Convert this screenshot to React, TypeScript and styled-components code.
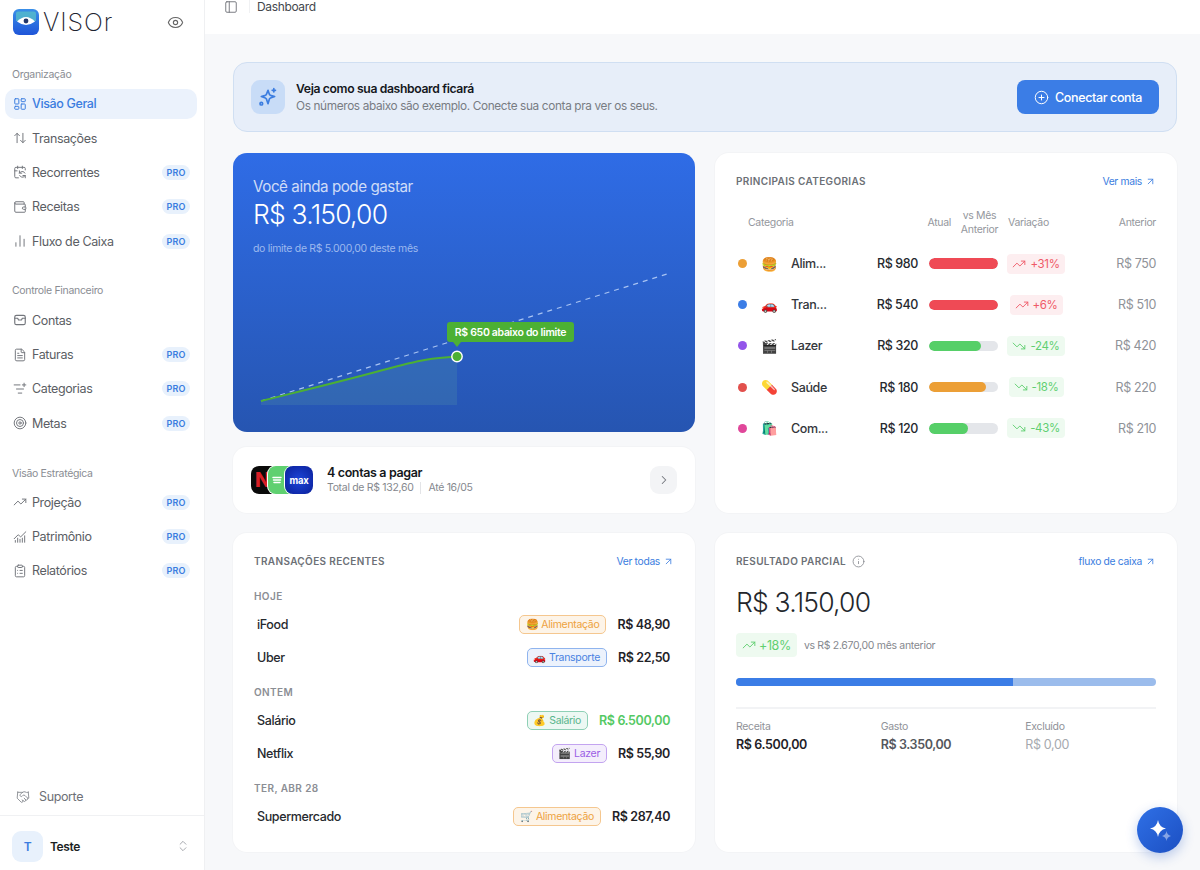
import React from 'react';
import styled, { createGlobalStyle } from 'styled-components';
import {
  LayoutDashboard, ArrowUpDown, CalendarSync, Wallet, ChartNoAxesColumn, FileText, ListFilterPlus,
  Target, TrendingUp, TrendingDown, ChartNoAxesCombined, ClipboardList, Handshake, Eye, PanelLeft,
  ChevronsUpDown, CirclePlus, ArrowUpRight, Info, ChevronRight,
} from 'lucide-react';

const GlobalStyle = createGlobalStyle`
  html, body { margin: 0; padding: 0; }
  body {
    font-family: Inter, "Liberation Sans", "Noto Color Emoji", sans-serif;
    color: #222;
    -webkit-font-smoothing: antialiased;
  }
  * { box-sizing: border-box; letter-spacing: -0.03em; }
`;

const Page = styled.div`
  display: flex;
  height: 870px;
  overflow: hidden;
  position: relative;
`;

/* ---------- sidebar ---------- */

const Sidebar = styled.aside`
  width: 205px;
  flex-shrink: 0;
  display: flex;
  flex-direction: column;
  background: #fff;
  border-right: 1px solid #eff0f2;
`;

const Brand = styled.div`
  display: flex;
  align-items: center;
  justify-content: space-between;
  height: 44px;
  padding: 0 20px 0 13px;
  color: #666;
`;

const BrandLeft = styled.div`
  display: flex;
  align-items: center;
  gap: 4px;
`;

const Wordmark = styled.span`
  font-size: 25px;
  font-weight: 200;
  letter-spacing: .9px;
  color: #1d2430;
  line-height: 26px;
`;

const NavSection = styled.nav`
  display: flex;
  flex-direction: column;
  margin-top: ${p => p.$top}px;
`;

const SectionLabel = styled.div`
  font-size: 10.5px;
  line-height: 14px;
  color: #8a8d93;
  padding-left: 12px;
  margin-bottom: 6.5px;
`;

const NavItem = styled.a`
  display: flex;
  align-items: center;
  height: 30.4px;
  margin: 0 7px 4px 5px;
  padding: 0 7px 0 8px;
  gap: 5px;
  border-radius: 10px;
  font-size: 12.5px;
  font-weight: ${p => (p.$active ? 500 : 400)};
  color: ${p => (p.$active ? '#3b7de0' : '#5b5e64')};
  background: ${p => (p.$active ? '#ebf2fc' : 'transparent')};
  svg { flex-shrink: 0; color: ${p => (p.$active ? '#3b7de0' : '#74777d')}; }
  span:first-of-type { flex: 1; }
`;

const ProBadge = styled.span`
  font-size: 9px;
  font-weight: 600;
  letter-spacing: .2px;
  color: #3b7de0;
  background: #e8f1fc;
  height: 15px;
  width: 28px;
  border-radius: 8px;
  display: flex;
  align-items: center;
  justify-content: center;
`;

const SidebarBottom = styled.div`
  margin-top: auto;
`;

const Support = styled.div`
  display: flex;
  align-items: center;
  gap: 9px;
  height: 36px;
  padding: 0 0 2px 16px;
  font-size: 12.5px;
  color: #6d7076;
  border-bottom: 1px solid #f0f1f3;
  svg { color: #85888e; }
`;

const UserRow = styled.div`
  display: flex;
  align-items: center;
  height: 54px;
  padding: 6px 14px 0 12px;
  gap: 7px;
`;

const Avatar = styled.div`
  width: 31px;
  height: 31px;
  border-radius: 9px;
  background: #e8f1fc;
  color: #3b7de0;
  font-size: 12px;
  font-weight: 600;
  display: flex;
  align-items: center;
  justify-content: center;
`;

const UserName = styled.span`
  flex: 1;
  font-size: 12px;
  font-weight: 600;
  color: #1c1f24;
`;

/* ---------- main ---------- */

const Main = styled.main`
  flex: 1;
  display: flex;
  flex-direction: column;
  min-width: 0;
`;

const Header = styled.header`
  height: 34px;
  flex-shrink: 0;
  background: #fff;
  display: flex;
  align-items: flex-start;
  padding-left: 19px;
  gap: 11px;
`;

const HeaderSlot = styled.div`
  height: 13px;
  display: flex;
  align-items: center;
  color: #6a6d73;
  font-size: 12px;
  white-space: nowrap;
`;

const HeaderTitle = styled(HeaderSlot)`
  color: #44474d;
  border-left: 1px solid #f0f1f3;
  padding-left: 7px;
`;

const Content = styled.div`
  flex: 1;
  background: #f7f8fa;
  padding: 28px 23px 18px 28px;
`;

const Banner = styled.section`
  display: flex;
  align-items: center;
  height: 70px;
  padding: 0 17px;
  margin-bottom: 21px;
  background: #e7eef9;
  border: 1px solid #d0dff2;
  border-radius: 14px;
`;

const BannerIcon = styled.div`
  width: 34px;
  height: 34px;
  border-radius: 9px;
  background: #c8dcf7;
  color: #3b7de0;
  display: flex;
  align-items: center;
  justify-content: center;
  margin-right: 11px;
`;

const BannerText = styled.div`
  flex: 1;
`;

const BannerTitle = styled.div`
  font-size: 12.2px;
  font-weight: 600;
  line-height: 17px;
  color: #15181d;
`;

const BannerSub = styled.div`
  font-size: 11.8px;
  line-height: 18px;
  color: #787c83;
`;

const ConnectButton = styled.button`
  width: 142px;
  height: 34px;
  border: none;
  border-radius: 8px;
  background: #3b7de6;
  color: #fff;
  font: 500 12.5px Inter, sans-serif;
  display: flex;
  align-items: center;
  justify-content: center;
  gap: 6px;
`;

const Grid = styled.div`
  display: grid;
  grid-template-columns: 462px 462px;
  grid-template-rows: 360px 319px;
  gap: 20px;
`;

const LeftColumn = styled.div`
  display: flex;
  flex-direction: column;
  gap: 15px;
`;

const Hero = styled.section`
  height: 279px;
  border-radius: 14px;
  padding: 25px 20px 0;
  color: #fff;
  background: linear-gradient(180deg, #2f6ce6 0%, #2655b1 100%);
  display: flex;
  flex-direction: column;
`;

const HeroLabel = styled.div`
  font-size: 15.2px;
  line-height: 18px;
  color: #cfdcf7;
`;

const HeroAmount = styled.div`
  font-size: 26.5px;
  font-weight: 300;
  line-height: 34px;
  margin-top: 1px;
  letter-spacing: -.8px;
`;

const HeroNote = styled.div`
  font-size: 10.5px;
  line-height: 14px;
  margin-top: 11px;
  color: #9db9ee;
`;

const ChartArea = styled.div`
  position: relative;
  height: 172px;
  margin: auto -20px 0;
  svg { display: block; }
`;

const ChartTip = styled.div`
  position: absolute;
  left: 214px;
  top: 62px;
  width: 127px;
  height: 20px;
  border-radius: 3px;
  background: #4cb034;
  color: #fff;
  font-size: 10.5px;
  font-weight: 600;
  display: flex;
  align-items: center;
  justify-content: center;
  white-space: nowrap;

  &::after {
    content: '';
    position: absolute;
    left: 6px;
    top: 20px;
    border: 4px solid transparent;
    border-top: 5px solid #4cb034;
  }
`;

const Card = styled.section`
  background: #fff;
  border-radius: 14px;
  box-shadow: 0 0 0 1px #f3f4f6;
  padding: 21px;
`;

const BillsCard = styled.section`
  height: 66px;
  background: #fff;
  border-radius: 14px;
  box-shadow: 0 0 0 1px #f3f4f6;
  padding: 0 18px;
  display: flex;
  align-items: center;
`;

const Logos = styled.div`
  display: flex;
  margin-right: 14px;
`;

const LogoTile = styled.div`
  width: 28px;
  height: 28px;
  border-radius: 8px;
  background: ${p => p.$bg};
  margin-left: ${p => (p.$first ? 0 : -11)}px;
  box-shadow: ${p => (p.$first ? 'none' : '0 0 0 1px #fff')};
  display: flex;
  align-items: center;
  justify-content: ${p => p.$justify || 'center'};
  padding-left: ${p => p.$inset || 0}px;
  position: relative;
  overflow: hidden;
`;

const NetflixN = styled.span`
  color: #d81f26;
  font-size: 20px;
  font-weight: 800;
  line-height: 1;
`;

const MaxText = styled.span`
  color: #fff;
  font-size: 9.5px;
  font-weight: 700;
  letter-spacing: -.2px;
`;

const BillsText = styled.div`
  flex: 1;
`;

const BillsTitle = styled.div`
  font-size: 12.5px;
  font-weight: 600;
  line-height: 16px;
  color: #14171b;
`;

const BillsSub = styled.div`
  font-size: 10.5px;
  line-height: 14px;
  color: #85888e;
  display: flex;
  align-items: center;
  gap: 7px;
  i { width: 1px; height: 12px; background: #e3e4e7; }
`;

const RoundButton = styled.div`
  width: 27px;
  height: 28px;
  border-radius: 9px;
  background: #f3f4f6;
  color: #74777d;
  display: flex;
  align-items: center;
  justify-content: center;
`;

const CardHead = styled.div`
  display: flex;
  align-items: center;
  justify-content: space-between;
  height: 14px;
`;

const CardTitle = styled.h2`
  margin: 0;
  font-size: 10px;
  font-weight: 600;
  letter-spacing: .35px;
  color: #6c7076;
  display: flex;
  align-items: center;
  gap: 6px;
  text-transform: uppercase;
`;

const CardLink = styled.a`
  font-size: 10.3px;
  color: #3b7de0;
  display: flex;
  align-items: center;
  gap: 3px;
`;

const TableHead = styled.div`
  display: grid;
  grid-template-columns: 165px 50px 57px 56px 92px;
  align-items: center;
  margin-top: 21px;
  height: 28px;
  font-size: 10.5px;
  line-height: 14px;
  color: #94979d;
`;

const HeadCategoria = styled.span`
  padding-left: 12px;
`;

const HeadAtual = styled.span`
  text-align: right;
`;

const HeadCompare = styled.span`
  text-align: center;
`;

const HeadRight = styled.span`
  text-align: right;
`;

const TableRows = styled.div`
  margin-top: 6px;
`;

const CatRow = styled.div`
  display: grid;
  grid-template-columns: 13px 42px 50px 77px 80px 66px 92px;
  align-items: center;
  height: 41.2px;
`;

const Dot = styled.span`
  width: 9px;
  height: 9px;
  border-radius: 50%;
  justify-self: center;
  background: ${p => p.$color};
`;

const CatEmoji = styled.span`
  font-size: 13.5px;
  text-align: center;
`;

const CatName = styled.span`
  font-size: 12.5px;
  font-weight: 500;
  color: #33363b;
  white-space: nowrap;
`;

const CatValue = styled.span`
  font-size: 12.5px;
  font-weight: 500;
  color: #26292e;
  text-align: right;
`;

const BarCell = styled.div`
  padding-left: 11px;
`;

const BarTrack = styled.div`
  height: 10.5px;
  border-radius: 6px;
  background: #e4e6ea;
  overflow: hidden;
`;

const BarFill = styled.div`
  height: 100%;
  border-radius: 6px;
  background: ${p => p.$color};
`;

const PillCell = styled.div`
  padding-left: 10px;
  display: flex;
  justify-content: center;
`;

const TrendPill = styled.span`
  height: ${p => (p.$large ? 24 : 20)}px;
  padding: 0 ${p => (p.$large ? 6 : 5)}px;
  border-radius: 4px;
  display: inline-flex;
  align-items: center;
  gap: ${p => (p.$large ? 3 : 4)}px;
  font-size: ${p => (p.$large ? 12.5 : 11.5)}px;
  color: ${p => (p.$up ? '#ef5a68' : '#5fcf70')};
  background: ${p => (p.$up ? '#fdeef0' : '#eefaf0')};
  white-space: nowrap;
`;

const CatPrev = styled.span`
  font-size: 12.5px;
  color: #8f9298;
  text-align: right;
`;

const GroupLabel = styled.div`
  font-size: 10px;
  font-weight: 600;
  letter-spacing: .4px;
  line-height: 14px;
  color: #8b8e94;
  margin-top: ${p => (p.$first ? 21 : 11.5)}px;
  margin-bottom: 4.5px;
  text-transform: uppercase;
`;

const TxRow = styled.div`
  display: flex;
  align-items: center;
  height: 33px;
  padding: 0 4px 0 3px;
  gap: 11px;
`;

const TxName = styled.span`
  flex: 1;
  font-size: 12.5px;
  font-weight: 500;
  color: #26292e;
`;

const Tag = styled.span`
  height: 19px;
  padding: 0 6px;
  border-radius: 5px;
  border: 1px solid ${p => p.$tone.border};
  background: ${p => p.$tone.bg};
  color: ${p => p.$tone.text};
  font-size: 10.5px;
  display: inline-flex;
  align-items: center;
  gap: 3px;
  white-space: nowrap;
`;

const TxAmount = styled.span`
  font-size: 12.5px;
  font-weight: 600;
  color: ${p => (p.$income ? '#54c964' : '#1f2227')};
`;

const ResultAmount = styled.div`
  font-size: 26.5px;
  font-weight: 300;
  line-height: 36px;
  margin-top: 16px;
  letter-spacing: -.8px;
  color: #24272c;
`;

const CompareRow = styled.div`
  display: flex;
  align-items: center;
  gap: 7px;
  margin-top: 13px;
  font-size: 10.5px;
  color: #85888e;
`;

const StackBar = styled.div`
  height: 8.5px;
  margin-top: 20.5px;
  border-radius: 5px;
  background: #9bbcec;
  overflow: hidden;
`;

const StackFill = styled.div`
  height: 100%;
  background: #3b7de6;
`;

const Stats = styled.div`
  display: grid;
  grid-template-columns: repeat(3, 1fr);
  gap: 14px;
  margin-top: 20.5px;
  padding-top: 11px;
  border-top: 2px solid #f2f3f5;
`;

const StatLabel = styled.div`
  font-size: 10.5px;
  line-height: 14px;
  color: #8f9298;
`;

const StatValue = styled.div`
  font-size: 12.5px;
  font-weight: ${p => (p.$muted ? 400 : 600)};
  line-height: 18px;
  margin-top: 2px;
  color: ${p => p.$color};
`;

const Fab = styled.button`
  position: absolute;
  right: 17px;
  bottom: 17px;
  width: 46px;
  height: 46px;
  border: none;
  border-radius: 50%;
  background: linear-gradient(135deg, #2f70e6 0%, #1c4fc2 100%);
  box-shadow: 0 4px 12px rgba(37, 90, 200, .3);
  display: flex;
  align-items: center;
  justify-content: center;
  padding: 0;
`;

/* ---------- drawings ---------- */

const VisorLogo = () => (
  <svg width="26" height="26" viewBox="0 0 26 26">
    <defs>
      <linearGradient id="visorBg" x1="0" y1="0" x2="0" y2="1">
        <stop offset="0" stopColor="#3a8fe8" />
        <stop offset="1" stopColor="#1f55d8" />
      </linearGradient>
    </defs>
    <rect width="26" height="26" rx="6" fill="url(#visorBg)" />
    <path d="M3 4.5 Q3 2.5 5 2.5 H21 Q23 2.5 23 4.5 V12 H3Z" fill="#58c0c8" opacity=".75" />
    <path d="M4 12.5 Q13 3.5 22 12.5 Q13 19.5 4 12.5Z" fill="#fff" />
    <circle cx="13" cy="12" r="2.4" fill="#22366a" />
  </svg>
);

const SparkleBadge = () => (
  <svg width="20" height="20" viewBox="0 0 24 24" fill="none" stroke="currentColor" strokeWidth="2" strokeLinecap="round" strokeLinejoin="round">
    <path d="M12 5 L13.6 9.6 Q14 10.6 15 11 L20 12.5 L15 14.2 Q14 14.6 13.6 15.6 L12 21 L10.2 15.6 Q9.8 14.6 8.8 14.2 L4 12.5 L8.8 11 Q9.8 10.6 10.2 9.6Z" transform="translate(0 -1)" />
    <path d="M19 2v4M17 4h4" />
    <circle cx="4" cy="20" r="1.6" />
  </svg>
);

const FabStars = () => (
  <svg width="24" height="24" viewBox="0 0 24 24" fill="#fff">
    <path d="M10 2 Q11 9 18 10.5 Q11 12 10 19 Q9 12 2 10.5 Q9 9 10 2Z" />
    <path opacity=".45" d="M18.5 13 Q19 17 23 18 Q19 19 18.5 23 Q18 19 14 18 Q18 17 18.5 13Z" />
  </svg>
);

const ContasIcon = () => (
  <svg width="14" height="14" viewBox="0 0 24 24" fill="none" stroke="currentColor" strokeWidth="2" strokeLinejoin="round" strokeLinecap="round">
    <rect x="3" y="4" width="18" height="16" rx="3" />
    <path d="M3 9h5l1.5 3h5L16 9h5" />
  </svg>
);

const SpotifyMark = () => (
  <svg width="12" height="14" viewBox="0 0 12 14" fill="none" stroke="#fff" strokeWidth="1.5" strokeLinecap="round">
    <path d="M2 4.5h8M2.5 7h7M3 9.5h6" />
  </svg>
);

const SpendChart = () => (
  <svg width="462" height="172" viewBox="0 0 462 172" fill="none">
    <path d="M28 141 C60 133 110 121 150 110 S200 98 224 96.5 V145 H28Z" fill="#4f8fa8" opacity=".28" />
    <path d="M28 141 L434 14" stroke="#a9c4f3" strokeWidth="1.2" strokeDasharray="5 5" />
    <path d="M28 141 C60 133 110 121 150 110 S200 98 224 96.5" stroke="#4cb034" strokeWidth="2" />
    <circle cx="224" cy="96.5" r="5.2" fill="#4cb034" stroke="#fff" strokeWidth="1.4" />
  </svg>
);

/* ---------- data ---------- */

const navGroups = [
  {
    label: 'Organização',
    top: 24,
    items: [
      { label: 'Visão Geral', Icon: LayoutDashboard, active: true },
      { label: 'Transações', Icon: ArrowUpDown },
      { label: 'Recorrentes', Icon: CalendarSync, pro: true },
      { label: 'Receitas', Icon: Wallet, pro: true },
      { label: 'Fluxo de Caixa', Icon: ChartNoAxesColumn, pro: true },
    ],
  },
  {
    label: 'Controle Financeiro',
    top: 24,
    items: [
      { label: 'Contas', Icon: ContasIcon },
      { label: 'Faturas', Icon: FileText, pro: true },
      { label: 'Categorias', Icon: ListFilterPlus, pro: true },
      { label: 'Metas', Icon: Target, pro: true },
    ],
  },
  {
    label: 'Visão Estratégica',
    top: 24,
    items: [
      { label: 'Projeção', Icon: TrendingUp, pro: true },
      { label: 'Patrimônio', Icon: ChartNoAxesCombined, pro: true },
      { label: 'Relatórios', Icon: ClipboardList, pro: true },
    ],
  },
];

const categories = [
  { dot: '#ec9f36', emoji: '🍔', name: 'Alim...', value: 'R$ 980', fill: 100, bar: '#ef4a55', trend: '+31%', up: true, prev: 'R$ 750' },
  { dot: '#3b7de6', emoji: '🚗', name: 'Tran...', value: 'R$ 540', fill: 100, bar: '#ef4a55', trend: '+6%', up: true, prev: 'R$ 510' },
  { dot: '#9355ea', emoji: '🎬', name: 'Lazer', value: 'R$ 320', fill: 76, bar: '#56cf68', trend: '-24%', up: false, prev: 'R$ 420' },
  { dot: '#e2504c', emoji: '💊', name: 'Saúde', value: 'R$ 180', fill: 82, bar: '#ec9f36', trend: '-18%', up: false, prev: 'R$ 220' },
  { dot: '#e0479a', emoji: '🛍️', name: 'Com...', value: 'R$ 120', fill: 57, bar: '#56cf68', trend: '-43%', up: false, prev: 'R$ 210' },
];

const tones = {
  orange: { border: '#f5c78f', bg: '#fdf4e8', text: '#eda23e' },
  blue: { border: '#8fb4ee', bg: '#ecf2fc', text: '#4a82e2' },
  green: { border: '#8fd0b6', bg: '#edf8f3', text: '#5ab58c' },
  purple: { border: '#c3a4f0', bg: '#f4eefc', text: '#9b5de5' },
};

const transactionGroups = [
  {
    label: 'Hoje',
    rows: [
      { name: 'iFood', emoji: '🍔', tag: 'Alimentação', tone: tones.orange, amount: 'R$ 48,90' },
      { name: 'Uber', emoji: '🚗', tag: 'Transporte', tone: tones.blue, amount: 'R$ 22,50' },
    ],
  },
  {
    label: 'Ontem',
    rows: [
      { name: 'Salário', emoji: '💰', tag: 'Salário', tone: tones.green, amount: 'R$ 6.500,00', income: true },
      { name: 'Netflix', emoji: '🎬', tag: 'Lazer', tone: tones.purple, amount: 'R$ 55,90' },
    ],
  },
  {
    label: 'Ter, Abr 28',
    rows: [
      { name: 'Supermercado', emoji: '🛒', tag: 'Alimentação', tone: tones.orange, amount: 'R$ 287,40' },
    ],
  },
];

const App = () => (
  <Page>
    <GlobalStyle />
    <Sidebar>
      <Brand>
        <BrandLeft>
          <VisorLogo />
          <Wordmark>VISOr</Wordmark>
        </BrandLeft>
        <Eye size={17} strokeWidth={1.6} />
      </Brand>
      {navGroups.map(group => (
        <NavSection key={group.label} $top={group.top}>
          <SectionLabel>{group.label}</SectionLabel>
          {group.items.map(({ label, Icon, active, pro }) => (
            <NavItem key={label} $active={active}>
              <Icon size={14} strokeWidth={1.7} />
              <span>{label}</span>
              {pro && <ProBadge>PRO</ProBadge>}
            </NavItem>
          ))}
        </NavSection>
      ))}
      <SidebarBottom>
        <Support>
          <Handshake size={14} strokeWidth={1.5} />
          Suporte
        </Support>
        <UserRow>
          <Avatar>T</Avatar>
          <UserName>Teste</UserName>
          <ChevronsUpDown size={14} strokeWidth={1.5} color="#9a9da3" />
        </UserRow>
      </SidebarBottom>
    </Sidebar>

    <Main>
      <Header>
        <HeaderSlot><PanelLeft size={14} strokeWidth={1.5} /></HeaderSlot>
        <HeaderTitle>Dashboard</HeaderTitle>
      </Header>
      <Content>
        <Banner>
          <BannerIcon><SparkleBadge /></BannerIcon>
          <BannerText>
            <BannerTitle>Veja como sua dashboard ficará</BannerTitle>
            <BannerSub>Os números abaixo são exemplo. Conecte sua conta pra ver os seus.</BannerSub>
          </BannerText>
          <ConnectButton><CirclePlus size={15} strokeWidth={1.6} />Conectar conta</ConnectButton>
        </Banner>

        <Grid>
          <LeftColumn>
            <Hero>
              <HeroLabel>Você ainda pode gastar</HeroLabel>
              <HeroAmount>R$ 3.150,00</HeroAmount>
              <HeroNote>do limite de R$ 5.000,00 deste mês</HeroNote>
              <ChartArea>
                <SpendChart />
                <ChartTip>R$ 650 abaixo do limite</ChartTip>
              </ChartArea>
            </Hero>
            <BillsCard>
              <Logos>
                <LogoTile $bg="#0a0a0a" $first $justify="flex-start" $inset={4}><NetflixN>N</NetflixN></LogoTile>
                <LogoTile $bg="#5fd070" $justify="flex-start" $inset={3}><SpotifyMark /></LogoTile>
                <LogoTile $bg="radial-gradient(circle, #1d46d8 0%, #0a1f9a 100%)"><MaxText>max</MaxText></LogoTile>
              </Logos>
              <BillsText>
                <BillsTitle>4 contas a pagar</BillsTitle>
                <BillsSub>Total de R$ 132,60<i />Até 16/05</BillsSub>
              </BillsText>
              <RoundButton><ChevronRight size={14} strokeWidth={1.8} /></RoundButton>
            </BillsCard>
          </LeftColumn>

          <Card>
            <CardHead>
              <CardTitle>Principais categorias</CardTitle>
              <CardLink>Ver mais <ArrowUpRight size={11} strokeWidth={1.8} /></CardLink>
            </CardHead>
            <TableHead>
              <HeadCategoria>Categoria</HeadCategoria>
              <HeadAtual>Atual</HeadAtual>
              <HeadCompare>vs Mês<br />Anterior</HeadCompare>
              <span>Variação</span>
              <HeadRight>Anterior</HeadRight>
            </TableHead>
            <TableRows>
              {categories.map(c => (
                <CatRow key={c.name}>
                  <Dot $color={c.dot} />
                  <CatEmoji>{c.emoji}</CatEmoji>
                  <CatName>{c.name}</CatName>
                  <CatValue>{c.value}</CatValue>
                  <BarCell>
                    <BarTrack><BarFill $color={c.bar} style={{ width: `${c.fill}%` }} /></BarTrack>
                  </BarCell>
                  <PillCell>
                    <TrendPill $up={c.up}>
                      {c.up ? <TrendingUp size={14} strokeWidth={1.6} /> : <TrendingDown size={14} strokeWidth={1.6} />}
                      {c.trend}
                    </TrendPill>
                  </PillCell>
                  <CatPrev>{c.prev}</CatPrev>
                </CatRow>
              ))}
            </TableRows>
          </Card>

          <Card>
            <CardHead>
              <CardTitle>Transações recentes</CardTitle>
              <CardLink>Ver todas <ArrowUpRight size={11} strokeWidth={1.8} /></CardLink>
            </CardHead>
            {transactionGroups.map((group, i) => (
              <div key={group.label}>
                <GroupLabel $first={i === 0}>{group.label}</GroupLabel>
                {group.rows.map(row => (
                  <TxRow key={row.name}>
                    <TxName>{row.name}</TxName>
                    <Tag $tone={row.tone}>{row.emoji} {row.tag}</Tag>
                    <TxAmount $income={row.income}>{row.amount}</TxAmount>
                  </TxRow>
                ))}
              </div>
            ))}
          </Card>

          <Card>
            <CardHead>
              <CardTitle>Resultado parcial <Info size={13} strokeWidth={1.5} color="#85888e" /></CardTitle>
              <CardLink>fluxo de caixa <ArrowUpRight size={11} strokeWidth={1.8} /></CardLink>
            </CardHead>
            <ResultAmount>R$ 3.150,00</ResultAmount>
            <CompareRow>
              <TrendPill $large><TrendingUp size={14} strokeWidth={1.6} />+18%</TrendPill>
              vs R$ 2.670,00 mês anterior
            </CompareRow>
            <StackBar><StackFill style={{ width: '66%' }} /></StackBar>
            <Stats>
              <div><StatLabel>Receita</StatLabel><StatValue $color="#1f2227">R$ 6.500,00</StatValue></div>
              <div><StatLabel>Gasto</StatLabel><StatValue $color="#54575d">R$ 3.350,00</StatValue></div>
              <div><StatLabel>Excluído</StatLabel><StatValue $color="#a6a9ae" $muted>R$ 0,00</StatValue></div>
            </Stats>
          </Card>
        </Grid>
      </Content>
    </Main>
    <Fab><FabStars /></Fab>
  </Page>
);

export default App;
